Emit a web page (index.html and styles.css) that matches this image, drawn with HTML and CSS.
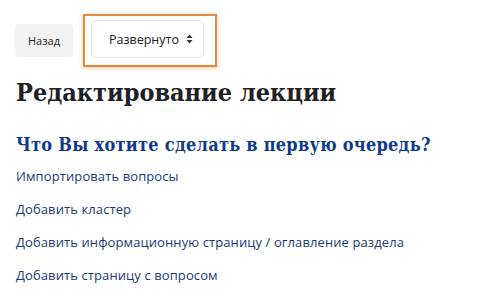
FILE: index.html
```html
<!DOCTYPE html>
<html lang="ru">
<head>
<meta charset="utf-8">
<link rel="stylesheet" href="styles.css">
</head>
<body>
<div class="page">
  <div class="toolbar">
    <button class="btn-back">Назад</button>
    <div class="highlight">
      <div class="select">
        <span>Развернуто</span>
        <svg class="caret" width="7" height="10" viewBox="0 0 7 10"><path d="M3.5 0.5 L6.5 4 H0.5 Z M3.5 9.5 L6.5 6 H0.5 Z" fill="#333"/></svg>
      </div>
    </div>
  </div>
  <h1 class="title">Редактирование лекции</h1>
  <h2 class="subtitle">Что Вы хотите сделать в первую очередь?</h2>
  <ul class="links">
    <li><a href="#">Импортировать вопросы</a></li>
    <li><a href="#">Добавить кластер</a></li>
    <li><a href="#">Добавить информационную страницу / оглавление раздела</a></li>
    <li><a href="#">Добавить страницу с вопросом</a></li>
  </ul>
</div>
</body>
</html>
```
FILE: styles.css
```css
html, body { margin: 0; padding: 0; background: #fff; }
.page { padding: 14px 16px 0 15px; font-family: "Open Sans", "Noto Sans", sans-serif; }
.toolbar { display: flex; align-items: center; gap: 10px; }
.btn-back {
  width: 58px; height: 33px; border: none; border-radius: 4px;
  background: #f2f2f2; color: #222; font-family: "Open Sans", sans-serif; font-size: 11px;
}
.highlight {
  border: 2px solid #e38b3f; padding: 4px 11px 7px 6px;
  box-shadow: 0 1px 4px rgba(227,139,63,0.5);
}
.select {
  width: 113px; height: 38px; box-sizing: border-box; border: 1px solid #e6e6e6; border-radius: 6px;
  display: flex; align-items: center; justify-content: space-between; padding: 0 10px 0 17px;
  font-size: 12.5px; color: #222;
}
.title {
  margin: 10px 0 0 1px; font-family: "DejaVu Serif", serif; font-stretch: condensed; font-weight: bold; font-size: 25px;
  color: #1d2125; line-height: 32px; letter-spacing: 0;
}
.subtitle {
  margin: 24px 0 0 1px; font-family: "DejaVu Serif", serif; font-stretch: condensed; font-weight: bold; font-size: 18px;
  color: #0f3a8c; line-height: 24px; letter-spacing: 0.25px;
}
.links { list-style: none; margin: 8px 0 0 1px; padding: 0; }
.links li { height: 33px; line-height: 20px; }
.links a { color: #1b3a7a; text-decoration: none; font-size: 13px; font-weight: 500; letter-spacing: 0.1px; }
```
